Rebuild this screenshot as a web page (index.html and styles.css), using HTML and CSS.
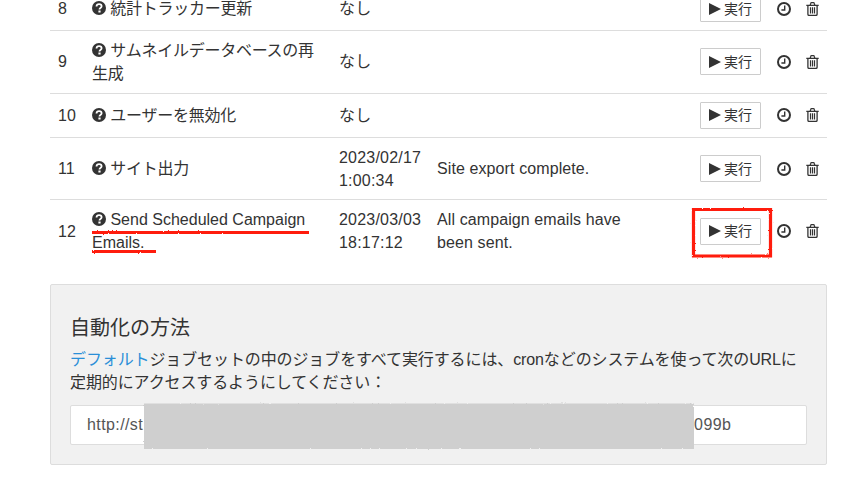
FILE: index.html
```html
<!DOCTYPE html>
<html lang="ja">
<head>
    <meta charset="UTF-8">
    <title>ジョブ</title>
    <link rel="stylesheet" href="styles.css">
</head>
<body>
    <svg width="0" height="0" class="defs">
        <symbol id="i-help" viewBox="0 0 14 14">
            <circle cx="7" cy="7" r="7" fill="#333"/>
            <path d="M4.5 5.5C4.6 4 5.7 3.2 7.1 3.2c1.4 0 2.5.8 2.5 2 0 1.9-2.1 1.7-2.1 3.2" fill="none" stroke="#fff" stroke-width="1.8"/>
            <rect x="6.4" y="9.5" width="2.2" height="2" fill="#fff"/>
        </symbol>
        <symbol id="i-play" viewBox="0 0 12 12">
            <path d="M0 0L12 6L0 12Z" fill="#333"/>
        </symbol>
        <symbol id="i-clock" viewBox="0 0 14 14">
            <circle cx="7" cy="7" r="6" fill="none" stroke="#333" stroke-width="2"/>
            <path d="M7.7 3.4V8H4.4" fill="none" stroke="#333" stroke-width="1.4"/>
        </symbol>
        <symbol id="i-trash" viewBox="0 0 13 14">
            <path d="M.3 3.3H12.7M1.9 3.3V12.3C1.9 13 2.4 13.4 3 13.4H10C10.6 13.4 11.1 13 11.1 12.3V3.3M4.2 3.3L4.8 1.2C4.9.8 5.2.7 5.5.7H7.5C7.8.7 8.1.8 8.2 1.2L8.8 3.3" fill="none" stroke="#333" stroke-width="1.3"/>
            <path d="M4.5 5.2V11.5M6.5 5.2V11.5M8.5 5.2V11.5" fill="none" stroke="#333" stroke-width="1.2"/>
        </symbol>
    </svg>

    <div class="page">
        <table class="jobs">
            <tbody>
                <tr>
                    <td class="num">8</td>
                    <td class="name ja"><svg class="help"><use href="#i-help"/></svg> 統計トラッカー更新</td>
                    <td class="last">なし</td>
                    <td class="msg"></td>
                    <td class="actions">
                        <div class="action-row">
                            <button class="run"><svg class="play"><use href="#i-play"/></svg>実行</button>
                            <svg class="clock"><use href="#i-clock"/></svg>
                            <svg class="trash"><use href="#i-trash"/></svg>
                        </div>
                    </td>
                </tr>
                <tr>
                    <td class="num">9</td>
                    <td class="name ja"><svg class="help"><use href="#i-help"/></svg> サムネイルデータベースの再生成</td>
                    <td class="last">なし</td>
                    <td class="msg"></td>
                    <td class="actions">
                        <div class="action-row">
                            <button class="run"><svg class="play"><use href="#i-play"/></svg>実行</button>
                            <svg class="clock"><use href="#i-clock"/></svg>
                            <svg class="trash"><use href="#i-trash"/></svg>
                        </div>
                    </td>
                </tr>
                <tr>
                    <td class="num">10</td>
                    <td class="name ja"><svg class="help"><use href="#i-help"/></svg> ユーザーを無効化</td>
                    <td class="last">なし</td>
                    <td class="msg"></td>
                    <td class="actions">
                        <div class="action-row">
                            <button class="run"><svg class="play"><use href="#i-play"/></svg>実行</button>
                            <svg class="clock"><use href="#i-clock"/></svg>
                            <svg class="trash"><use href="#i-trash"/></svg>
                        </div>
                    </td>
                </tr>
                <tr>
                    <td class="num">11</td>
                    <td class="name ja"><svg class="help"><use href="#i-help"/></svg> サイト出力</td>
                    <td class="last">2023/02/17 1:00:34</td>
                    <td class="msg">Site export complete.</td>
                    <td class="actions">
                        <div class="action-row">
                            <button class="run"><svg class="play"><use href="#i-play"/></svg>実行</button>
                            <svg class="clock"><use href="#i-clock"/></svg>
                            <svg class="trash"><use href="#i-trash"/></svg>
                        </div>
                    </td>
                </tr>
                <tr>
                    <td class="num">12</td>
                    <td class="name"><svg class="help"><use href="#i-help"/></svg> Send Scheduled Campaign Emails.</td>
                    <td class="last">2023/03/03 18:17:12</td>
                    <td class="msg">All campaign emails have been sent.</td>
                    <td class="actions">
                        <div class="action-row">
                            <button class="run"><svg class="play"><use href="#i-play"/></svg>実行</button>
                            <svg class="clock"><use href="#i-clock"/></svg>
                            <svg class="trash"><use href="#i-trash"/></svg>
                        </div>
                    </td>
                </tr>
            </tbody>
        </table>

        <div class="well">
            <h4 class="well-title">自動化の方法</h4>
            <p class="well-text"><a class="link" href="#">デフォルト</a>ジョブセットの中のジョブをすべて実行するには、cronなどのシステムを使って次のURLに定期的にアクセスするようにしてください：</p>
            <div class="url-box">http://st<span class="url-gap"></span>099b</div>
        </div>
    </div>

    <!-- marks drawn on top of the screenshot -->
    <svg class="marks" width="848" height="480">
        <defs>
            <filter id="rough" x="-5%" y="-50%" width="110%" height="200%">
                <feTurbulence type="fractalNoise" baseFrequency="0.6" numOctaves="2" seed="3"/>
                <feDisplacementMap in="SourceGraphic" scale="2"/>
                <feGaussianBlur stdDeviation="0.4"/>
            </filter>
        </defs>
        <g fill="none" stroke="#ff1a0a" stroke-width="3.2" filter="url(#rough)">
            <path d="M92 232.5H309"/>
            <path d="M92 251.5H156"/>
            <path d="M693.5 209.5H770.5V256H693.5Z"/>
        </g>
        <rect class="redact" x="144" y="403.5" width="550" height="45.5" filter="url(#rough)"/>
    </svg>
</body>
</html>
```

FILE: styles.css
```css
html, body {
    margin: 0;
    height: 480px;
    overflow: hidden;
}

body {
    background-color: #fff;
    color: #333;
    font-family: "Liberation Sans", "Noto Sans CJK JP", sans-serif;
    font-size: 16px;
    line-height: 1.42857;
}

.defs {
    display: block;
    height: 0;
}

.page {
    width: 777px;
    margin-left: 50px;
    margin-top: -13px;
}

.jobs {
    width: 777px;
    border-collapse: collapse;
    table-layout: fixed;
}

.jobs td {
    padding: 9px 8px 7px;
    border-top: 1px solid #ddd;
    vertical-align: middle;
}

.jobs tr:first-child td {
    border-top: none;
}

.jobs .actions {
    padding: 8px;
}

.num {
    width: 18px;
}

.name {
    width: 231px;
}

.ja {
    letter-spacing: -0.25px;
}

.last {
    width: 82px;
    letter-spacing: 0.2px;
}

.jobs .msg {
    width: 187px;
    padding-right: 68px;
    letter-spacing: 0.1px;
}

.help {
    width: 14px;
    height: 14px;
    vertical-align: -1px;
}

.action-row {
    display: flex;
    align-items: center;
}

.run {
    display: flex;
    align-items: center;
    width: 61px;
    height: 27px;
    padding: 0 0 2px 8px;
    margin: 0;
    background-color: #fff;
    border: 1px solid #ccc;
    border-radius: 1px;
    color: #333;
    font-family: inherit;
    font-size: 14px;
    cursor: pointer;
}

.play {
    width: 12px;
    height: 12px;
    margin-top: 2px;
    margin-right: 3px;
}

.clock {
    width: 14px;
    height: 14px;
    margin-left: 16px;
}

.trash {
    width: 13px;
    height: 14px;
    margin-left: 15px;
}

.well {
    box-sizing: border-box;
    height: 181px;
    margin-top: 22px;
    padding: 19px 19px 0;
    background-color: #f1f1f1;
    border: 1px solid #ddd;
    border-radius: 2px;
}

.well-title {
    margin: 13px 0 10px;
    font-size: 20px;
    font-weight: 400;
    line-height: 1.1;
}

.well-text {
    margin: 0 0 10px;
    letter-spacing: -0.11px;
}

.link {
    color: #2a8fd8;
    text-decoration: none;
}

.url-box {
    box-sizing: border-box;
    height: 40px;
    padding: 0 16px;
    background-color: #fff;
    border: 1px solid #ddd;
    border-radius: 2px;
    color: #555;
    letter-spacing: 0.4px;
    line-height: 38px;
    white-space: nowrap;
}

.url-gap {
    display: inline-block;
    width: 551px;
}

.marks {
    position: absolute;
    left: 0;
    top: 0;
}

.redact {
    fill: #cfcfcf;
}
```
